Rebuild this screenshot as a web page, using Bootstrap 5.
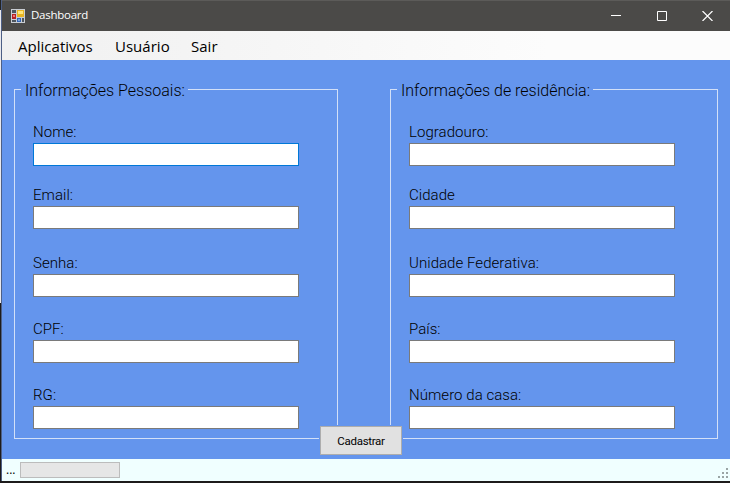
<!DOCTYPE html>
<html lang="pt-BR">
<head>
<meta charset="utf-8">
<title>Dashboard</title>
<link href="https://cdn.jsdelivr.net/npm/bootstrap@5.3.0/dist/css/bootstrap.min.css" rel="stylesheet">
<style>
body{width:730px;height:483px;overflow:hidden;color:#000;font-family:"Liberation Sans",sans-serif;background:linear-gradient(#222 0 10px,#e9e9ee 10px 303px,#1d1b1b 303px)}
.window{margin-left:1px;height:481px;border-left:1px solid #4d5f86;background:#6495ed}
.titlebar{height:31px;background:#4b4a48;border-top:1px solid #5c5b59;color:#fff;font:11.5px/14px "Open Sans",sans-serif;padding-left:9px}
.titlebar .caption{margin:-2px 0 0 6px;letter-spacing:-.25px}
.winbtn{width:45px;height:30px}
.winbtn:nth-child(2){width:46px}
.menubar{height:29px;background:linear-gradient(90deg,#f0f0f0,#fcfcfc 75%);font:400 15px/31px "Open Sans",sans-serif;letter-spacing:.02px;padding-left:16px}
.menubar a{color:#000;text-decoration:none}
.workspace{height:399px;padding:19px 12px 0}
.group{height:360px;border:1px solid #d3e0f8;padding:0 0 0 18px;margin:0}
.group legend{float:none;width:auto;height:20px;font:300 16px/23px Roboto,"Liberation Sans",sans-serif;letter-spacing:0;margin:0 0 0 -12px;padding:0 3px 0 4px;white-space:nowrap}
.personal{width:324px}
.residence{width:328px}
.field{height:66px}
.field label{display:block;height:22px;font:300 15px/23px Roboto,"Liberation Sans",sans-serif;letter-spacing:.05px;white-space:nowrap}
.field .form-control{width:266px;height:23px;min-height:0;padding:1px 3px;border:1px solid #7a7a7a;border-radius:0;font-size:14.67px;background:#fff;box-shadow:none}
.field .form-control.active-input{border-color:#0078d7}
.f1{height:63px}.f2{height:68px}
.fields{padding-top:22px}
.submit{left:319px;top:425px;width:84px;height:31px;background:#6495ed;padding:1px}
.submit .btn{width:82px;height:29px;padding:0;border:1px solid #adadad;border-radius:0;background:#e1e1e1;color:#000;font:11.5px Roboto,"Liberation Sans",sans-serif;letter-spacing:-.3px}
.statusbar{height:22px;background:#f0ffff;padding:0 1px 0 4px;font:12px/22px "Open Sans",sans-serif}
.statusbar .progress{width:100px;height:16px;border:1px solid #bcbcbc;border-radius:0;background:#e6e6e6}
.c-apps{width:97px}.c-user{width:76px}.dots{width:14px}
svg{display:block}
</style>
</head>
<body class="position-relative">
<div class="window">
  <header class="titlebar d-flex align-items-center">
    <svg width="14" height="14" viewBox="0 0 14 14"><path fill="#c9cdd3" d="M0 0h14v14H0z"/><path fill="#4c555f" d="M1 1h4v3H1zM1 11h4v2H1z"/><path fill="#b51f24" d="M1 5h4v5H1z"/><path fill="#ee7774" d="M2 6h2v2H2z"/><path fill="#e8b523" d="M6 1h7v7H6z"/><path fill="#ffe67b" d="M7 2h5v3H7z"/><path fill="#3464b5" d="M6 9h4v4H6z"/><path fill="#78a5e2" d="M7 10h2v2H7z"/><path fill="#4c555f" d="M11 9h2v4h-2z"/></svg>
    <span class="caption">Dashboard</span>
    <div class="ms-auto d-flex">
      <span class="winbtn d-flex align-items-center justify-content-center"><svg width="11" height="10"><path d="M0 4.5h10" stroke="#fff"/></svg></span>
      <span class="winbtn d-flex align-items-center justify-content-center"><svg width="10" height="10"><path d="M.5 .5h9v9h-9z" fill="none" stroke="#fff"/></svg></span>
      <span class="winbtn d-flex align-items-center justify-content-center"><svg width="11" height="10"><path d="M.5 0l10 10M10.5 0L.5 10" stroke="#fff" stroke-width="1.2"/></svg></span>
    </div>
  </header>
  <nav class="menubar d-flex">
    <a href="#" class="c-apps">Aplicativos</a><a href="#" class="c-user">Usuário</a><a href="#">Sair</a>
  </nav>
  <main class="workspace d-flex justify-content-between">
    <fieldset class="group personal">
      <legend>Informações Pessoais:</legend>
      <div class="fields">
        <div class="field f1"><label for="nome">Nome:</label><input id="nome" class="form-control active-input"></div>
        <div class="field f2"><label for="email">Email:</label><input id="email" class="form-control"></div>
        <div class="field"><label for="senha">Senha:</label><input id="senha" type="password" class="form-control"></div>
        <div class="field"><label for="cpf">CPF:</label><input id="cpf" class="form-control"></div>
        <div class="field"><label for="rg">RG:</label><input id="rg" class="form-control"></div>
      </div>
    </fieldset>
    <fieldset class="group residence">
      <legend>Informações de residência:</legend>
      <div class="fields">
        <div class="field f1"><label for="log">Logradouro:</label><input id="log" class="form-control"></div>
        <div class="field f2"><label for="cidade">Cidade</label><input id="cidade" class="form-control"></div>
        <div class="field"><label for="uf">Unidade Federativa:</label><input id="uf" class="form-control"></div>
        <div class="field"><label for="pais">País:</label><input id="pais" class="form-control"></div>
        <div class="field"><label for="casa">Número da casa:</label><input id="casa" class="form-control"></div>
      </div>
    </fieldset>
  </main>
  <footer class="statusbar d-flex align-items-center">
    <span class="dots">...</span>
    <div class="progress"></div>
    <svg class="ms-auto align-self-end" width="11" height="13" viewBox="0 0 11 13"><path fill="#9aa5a5" d="M8 0h2v2H8zM4 4h2v2H4zM8 4h2v2H8zM0 8h2v2H0zM4 8h2v2H4zM8 8h2v2H8z"/></svg>
  </footer>
</div>
<div class="submit position-absolute"><button type="button" class="btn d-block">Cadastrar</button></div>
<script src="https://cdn.jsdelivr.net/npm/bootstrap@5.3.0/dist/js/bootstrap.bundle.min.js"></script>
</body>
</html>
